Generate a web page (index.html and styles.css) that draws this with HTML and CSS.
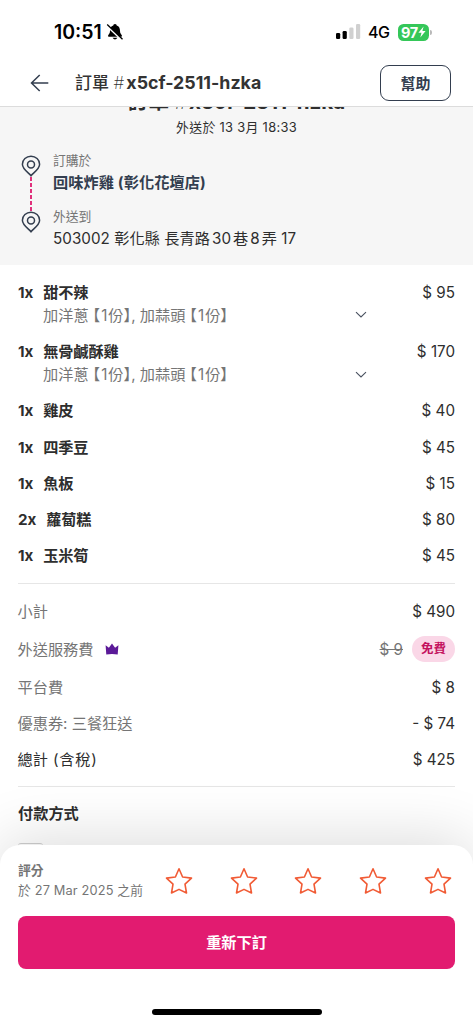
FILE: index.html
```html
<!DOCTYPE html>
<html lang="zh-Hant">
<head>
<meta charset="utf-8">
<meta name="viewport" content="width=device-width, initial-scale=1">
<title>訂單</title>
<link rel="stylesheet" href="styles.css">
</head>
<body>
<header class="top">
  <div class="status">
    <span class="time">10:51</span>
    <svg class="bell" width="18" height="18" viewBox="0 0 18 18"><path d="M9 1C7.700 1 7.400 2 7.300 2.400C4.800 3.200 4 5.300 4 8C4 10.700 2.500 11.300 2 12.700Q1.800 13.700 3 13.700H15Q16.200 13.700 16 12.700C15.500 11.300 14 10.700 14 8C14 5.300 13.200 3.200 10.700 2.400C10.600 2 10.300 1 9 1ZM6.500 14.800Q9 18 11.500 14.800Z"/><path d="M1 2.700L16.200 17.200" stroke="#fff" stroke-width="2"/><path d="M1.200 1.500L16.500 16.200" stroke="#000" stroke-width="1.300"/></svg>
    <svg class="signal" width="25" height="16" viewBox="0 0 25 16"><rect y="9" width="4.200" height="6" rx="1.300"/><rect x="6.600" y="7" width="4.200" height="8" rx="1.300"/><rect x="13.300" y="3.500" width="4.200" height="11.500" rx="1.300" fill="#d0d0d0"/><rect x="20" y="0" width="4.200" height="15" rx="1.300" fill="#d0d0d0"/></svg>
    <span class="network">4G</span>
    <span class="battery">97<svg width="8" height="12" viewBox="0 0 8 12"><path d="M5.600 .5L.4 6.700H3.500L2.300 11.500L7.600 5.100H4.400Z" fill="#fff"/></svg></span>
    <i class="battery-tip"></i>
  </div>
  <div class="nav">
    <svg class="back" width="20" height="18" viewBox="0 0 20 18"><path d="M18.300 9H1.700M9.700 1L1.500 9L9.700 17" fill="none" stroke="#333e4f" stroke-width="1.500"/></svg>
    <h1 class="title">訂單 <span class="hash">#</span><b>x5cf-2511-hzka</b></h1>
    <button class="help">幫助</button>
  </div>
</header>
<main class="content">
  <section class="hero">
    <h2 class="hero-title">訂單 <span class="hash">#</span>x5cf-2511-hzka</h2>
    <p class="delivered">外送於 13 3月 18:33</p>
    <div class="route">
      <div class="track">
        <svg width="20" height="22" viewBox="0 0 20 22"><path d="M10 20.700C7.800 18 1.400 14.300 1.400 9.300A8.600 8.100 0 0 1 18.600 9.300C18.600 14.300 12.200 18 10 20.700Z" fill="none" stroke="#333e4f" stroke-width="1.500"/><circle cx="10" cy="9.600" r="3.500" fill="none" stroke="#333e4f" stroke-width="1.500"/></svg>
        <i class="dash"></i>
        <svg width="20" height="22" viewBox="0 0 20 22"><path d="M10 20.700C7.800 18 1.400 14.300 1.400 9.300A8.600 8.100 0 0 1 18.600 9.300C18.600 14.300 12.200 18 10 20.700Z" fill="none" stroke="#333e4f" stroke-width="1.500"/><circle cx="10" cy="9.600" r="3.500" fill="none" stroke="#333e4f" stroke-width="1.500"/></svg>
      </div>
      <div class="stops">
        <span class="stop-label">訂購於</span>
        <span class="stop shop">回味炸雞 (彰化花壇店)</span>
        <span class="stop-label second">外送到</span>
        <span class="stop address">503002 彰化縣 長青路<span class="num">30</span>巷<span class="num">8</span>弄 17</span>
      </div>
    </div>
  </section>
  <section class="items">
    <div class="item"><div class="line"><b>1x</b><b>甜不辣</b><span class="price">$ 95</span></div>
      <div class="options"><span class="opt">加洋蔥<span class="lb">【</span>1<span class="unit">份</span><span class="rb">】</span>, 加蒜頭<span class="lb">【</span>1<span class="unit">份</span><span class="rb">】</span></span><svg width="12" height="8" viewBox="0 0 12 8"><path d="M1 1.200L6 6L11 1.200" fill="none" stroke="#4a5260" stroke-width="1.100"/></svg></div></div>
    <div class="item"><div class="line"><b>1x</b><b>無骨鹹酥雞</b><span class="price">$ 170</span></div>
      <div class="options"><span class="opt">加洋蔥<span class="lb">【</span>1<span class="unit">份</span><span class="rb">】</span>, 加蒜頭<span class="lb">【</span>1<span class="unit">份</span><span class="rb">】</span></span><svg width="12" height="8" viewBox="0 0 12 8"><path d="M1 1.200L6 6L11 1.200" fill="none" stroke="#4a5260" stroke-width="1.100"/></svg></div></div>
    <div class="item"><div class="line"><b>1x</b><b>雞皮</b><span class="price">$ 40</span></div></div>
    <div class="item"><div class="line"><b>1x</b><b>四季豆</b><span class="price">$ 45</span></div></div>
    <div class="item"><div class="line"><b>1x</b><b>魚板</b><span class="price">$ 15</span></div></div>
    <div class="item"><div class="line"><b>2x</b><b>蘿蔔糕</b><span class="price">$ 80</span></div></div>
    <div class="item"><div class="line"><b>1x</b><b>玉米筍</b><span class="price">$ 45</span></div></div>
  </section>
  <section class="summary">
    <div class="sum"><span>小計</span><span class="price">$ 490</span></div>
    <div class="sum fee"><span>外送服務費</span><svg width="14" height="12" viewBox="0 0 14 12"><path d="M.6 2.200L3.900 4.700L7 .4L10.100 4.700L13.400 2.200L12.700 11.500Q7 10.700 1.300 11.500Z" fill="#5b1a98"/></svg><s class="old">$ 9</s><span class="free">免費</span></div>
    <div class="sum"><span>平台費</span><span class="price">$ 8</span></div>
    <div class="sum"><span>優惠券: 三餐狂送</span><span class="price">- $ 74</span></div>
    <div class="sum total"><span>總計<span class="paren"> (含稅)</span></span><span class="price">$ 425</span></div>
  </section>
  <section class="payment">
    <h3>付款方式</h3>
    <i class="card-edge"></i>
  </section>
</main>
<footer class="sheet">
  <div class="rating">
    <div class="rate-text"><b>評分</b><span>於 27 Mar 2025 之前</span></div>
    <svg class="star" viewBox="0 0 28 28"><path d="M14 1.800L17.600 10L26.500 11.100L20 17.200L21.500 26L14 22.400L6.500 26L8 17.200L1.500 11.100L10.400 10Z"/></svg>
    <svg class="star" viewBox="0 0 28 28"><path d="M14 1.800L17.600 10L26.500 11.100L20 17.200L21.500 26L14 22.400L6.500 26L8 17.200L1.500 11.100L10.400 10Z"/></svg>
    <svg class="star" viewBox="0 0 28 28"><path d="M14 1.800L17.600 10L26.500 11.100L20 17.200L21.500 26L14 22.400L6.500 26L8 17.200L1.500 11.100L10.400 10Z"/></svg>
    <svg class="star" viewBox="0 0 28 28"><path d="M14 1.800L17.600 10L26.500 11.100L20 17.200L21.500 26L14 22.400L6.500 26L8 17.200L1.500 11.100L10.400 10Z"/></svg>
    <svg class="star" viewBox="0 0 28 28"><path d="M14 1.800L17.600 10L26.500 11.100L20 17.200L21.500 26L14 22.400L6.500 26L8 17.200L1.500 11.100L10.400 10Z"/></svg>
  </div>
  <button class="reorder">重新下訂</button>
  <i class="home"></i>
</footer>
</body>
</html>
```
FILE: styles.css
```css
* { box-sizing: border-box; margin: 0; padding: 0; }
body {
  width: 473px; height: 1024px; overflow: hidden;
  display: flex; flex-direction: column;
  background: #fff; color: #2e2e2e;
  font: 15.200px/23px Inter, "Noto Sans CJK TC", sans-serif;
}
button { font: inherit; }
svg, i { flex: none; display: block; }

.top { height: 107px; flex: none; background: #fff; border-bottom: 1px solid #dcdcdc; z-index: 2; }
.status { display: flex; align-items: center; height: 60px; padding: 4px 41px 0 54px; color: #000; }
.time { font-size: 19.500px; font-weight: 600; width: 48px; letter-spacing: 0; white-space: nowrap; }
.bell { margin-left: 4px; }
.signal { margin-left: auto; }
.network { font-size: 16px; font-weight: 500; margin: 1px 0 0 7px; width: 22px; letter-spacing: -.6px; }
.battery {
  display: flex; align-items: center; justify-content: center;
  width: 31px; height: 17px; margin-left: 8px; border-radius: 5.500px;
  background: #35c759; color: #fff; font-size: 14.500px; font-weight: 700; line-height: 17px; letter-spacing: -.4px;
}
.battery-tip { width: 2px; height: 5px; margin-left: 1px; border-radius: 0 2px 2px 0; background: #b9b9b9; }
.nav { display: flex; align-items: center; height: 46px; padding: 0 22px 0 30px; }
.title { margin-left: 25px; font-size: 17px; line-height: 24px; font-weight: 500; white-space: nowrap; color: #333; }
.title b { font-size: 17.800px; font-weight: 700; }
.hash { font-weight: 200; letter-spacing: 2px; }
.help {
  width: 71px; height: 36px; margin-left: auto; border: 1px solid #333e4f; border-radius: 9px;
  background: #fff; color: #333e4f; font-size: 15px; font-weight: 700;
}

.content { flex: none; height: 758px; overflow: hidden; }
.hero { height: 158px; overflow: hidden; background: #f6f6f6; }
.hero-title { margin-top: -17px; height: 24px; font-size: 20.600px; line-height: 24px; font-weight: 700; text-align: center; white-space: nowrap; }
.delivered { margin-top: 4px; font-size: 12.900px; line-height: 20px; text-align: center; letter-spacing: .3px; }
.route { display: flex; margin-top: 13px; padding-left: 21px; }
.track { display: flex; flex-direction: column; align-items: center; padding-top: 4px; }
.dash { width: 1.500px; height: 34px; background: repeating-linear-gradient(#e0307b 0 4px, transparent 4px 6px); }
.stops { display: flex; flex-direction: column; margin-left: 12px; white-space: nowrap; }
.stop-label { font-size: 12.800px; line-height: 20px; color: #757575; }
.stop { line-height: 24px; }
.shop { font-weight: 700; color: #333e4f; letter-spacing: .1px; }
.second { margin-top: 12px; }
.address { letter-spacing: .05px; }
.num { margin: 0 2px; }

.items { margin: 9px 18px 0; padding-bottom: 9px; border-bottom: 1px solid #e6e6e6; }
.item { padding: 6.600px 0; line-height: 23.100px; }
.line { display: flex; height: 23.100px; gap: 10px; }
.line b { font-weight: 700; letter-spacing: -.1px; }
.price { margin-left: auto; letter-spacing: 0; }
.options { display: flex; align-items: center; justify-content: space-between; height: 23.100px; padding: 0 88px 0 25px; color: #757575; }
.opt { white-space: nowrap; }
.lb, .rb { font-feature-settings: "halt"; }
.lb { margin-left: 4px; margin-right: 1px; }
.unit { margin-left: 1px; }

.summary { margin: 0 18px; padding: 9px 0 8px; border-bottom: 1px solid #e6e6e6; }
.sum { display: flex; align-items: center; height: 36.300px; color: #757575; }
.sum > span:first-child { margin-left: -.5px; }
.sum .price { color: #2e2e2e; }
.fee { height: 39.500px; }
.fee svg { margin-left: 12px; }
.old { margin-left: auto; }
.free { width: 43px; height: 26px; margin-left: 9px; border-radius: 13px; background: #fad7e7; color: #c4125f; font-size: 12.500px; font-weight: 700; line-height: 26px; text-align: center; }
.total { color: #2e2e2e; }
.paren { letter-spacing: .8px; }
.payment { padding: 15px 18px 0; }
.payment h3 { font-size: 15.200px; line-height: 24px; font-weight: 700; }
.card-edge { width: 25px; height: 30px; margin-top: 17px; border-top: 1px solid #d0d0d0; border-radius: 3px; }

.sheet {
  height: 179px; flex: none; margin-top: -20px; padding: 16px 18px 0; z-index: 1;
  background: #fff; border-radius: 20px 20px 0 0; box-shadow: 0 -6px 60px rgba(0,0,0,.14);
}
.rating { display: flex; align-items: center; height: 40px; margin-right: 3px; }
.rate-text { display: flex; flex-direction: column; width: 147px; flex: none; color: #757575; font-size: 12.800px; line-height: 20px; white-space: nowrap; }
.rate-text span { letter-spacing: .15px; }
.star { width: 28px; height: 28px; }
.star + .star { margin-left: 36.700px; }
.star path { fill: none; stroke: #f15b35; stroke-width: 1.600; stroke-linejoin: round; }
.reorder { display: block; width: 437px; height: 53px; margin-top: 15px; border: 0; border-radius: 8px; background: #e21b70; color: #fff; font-weight: 700; font-size: 15.200px; }
.home { width: 170px; height: 6px; margin: 40px auto 0; border-radius: 3px; background: #000; }
```
